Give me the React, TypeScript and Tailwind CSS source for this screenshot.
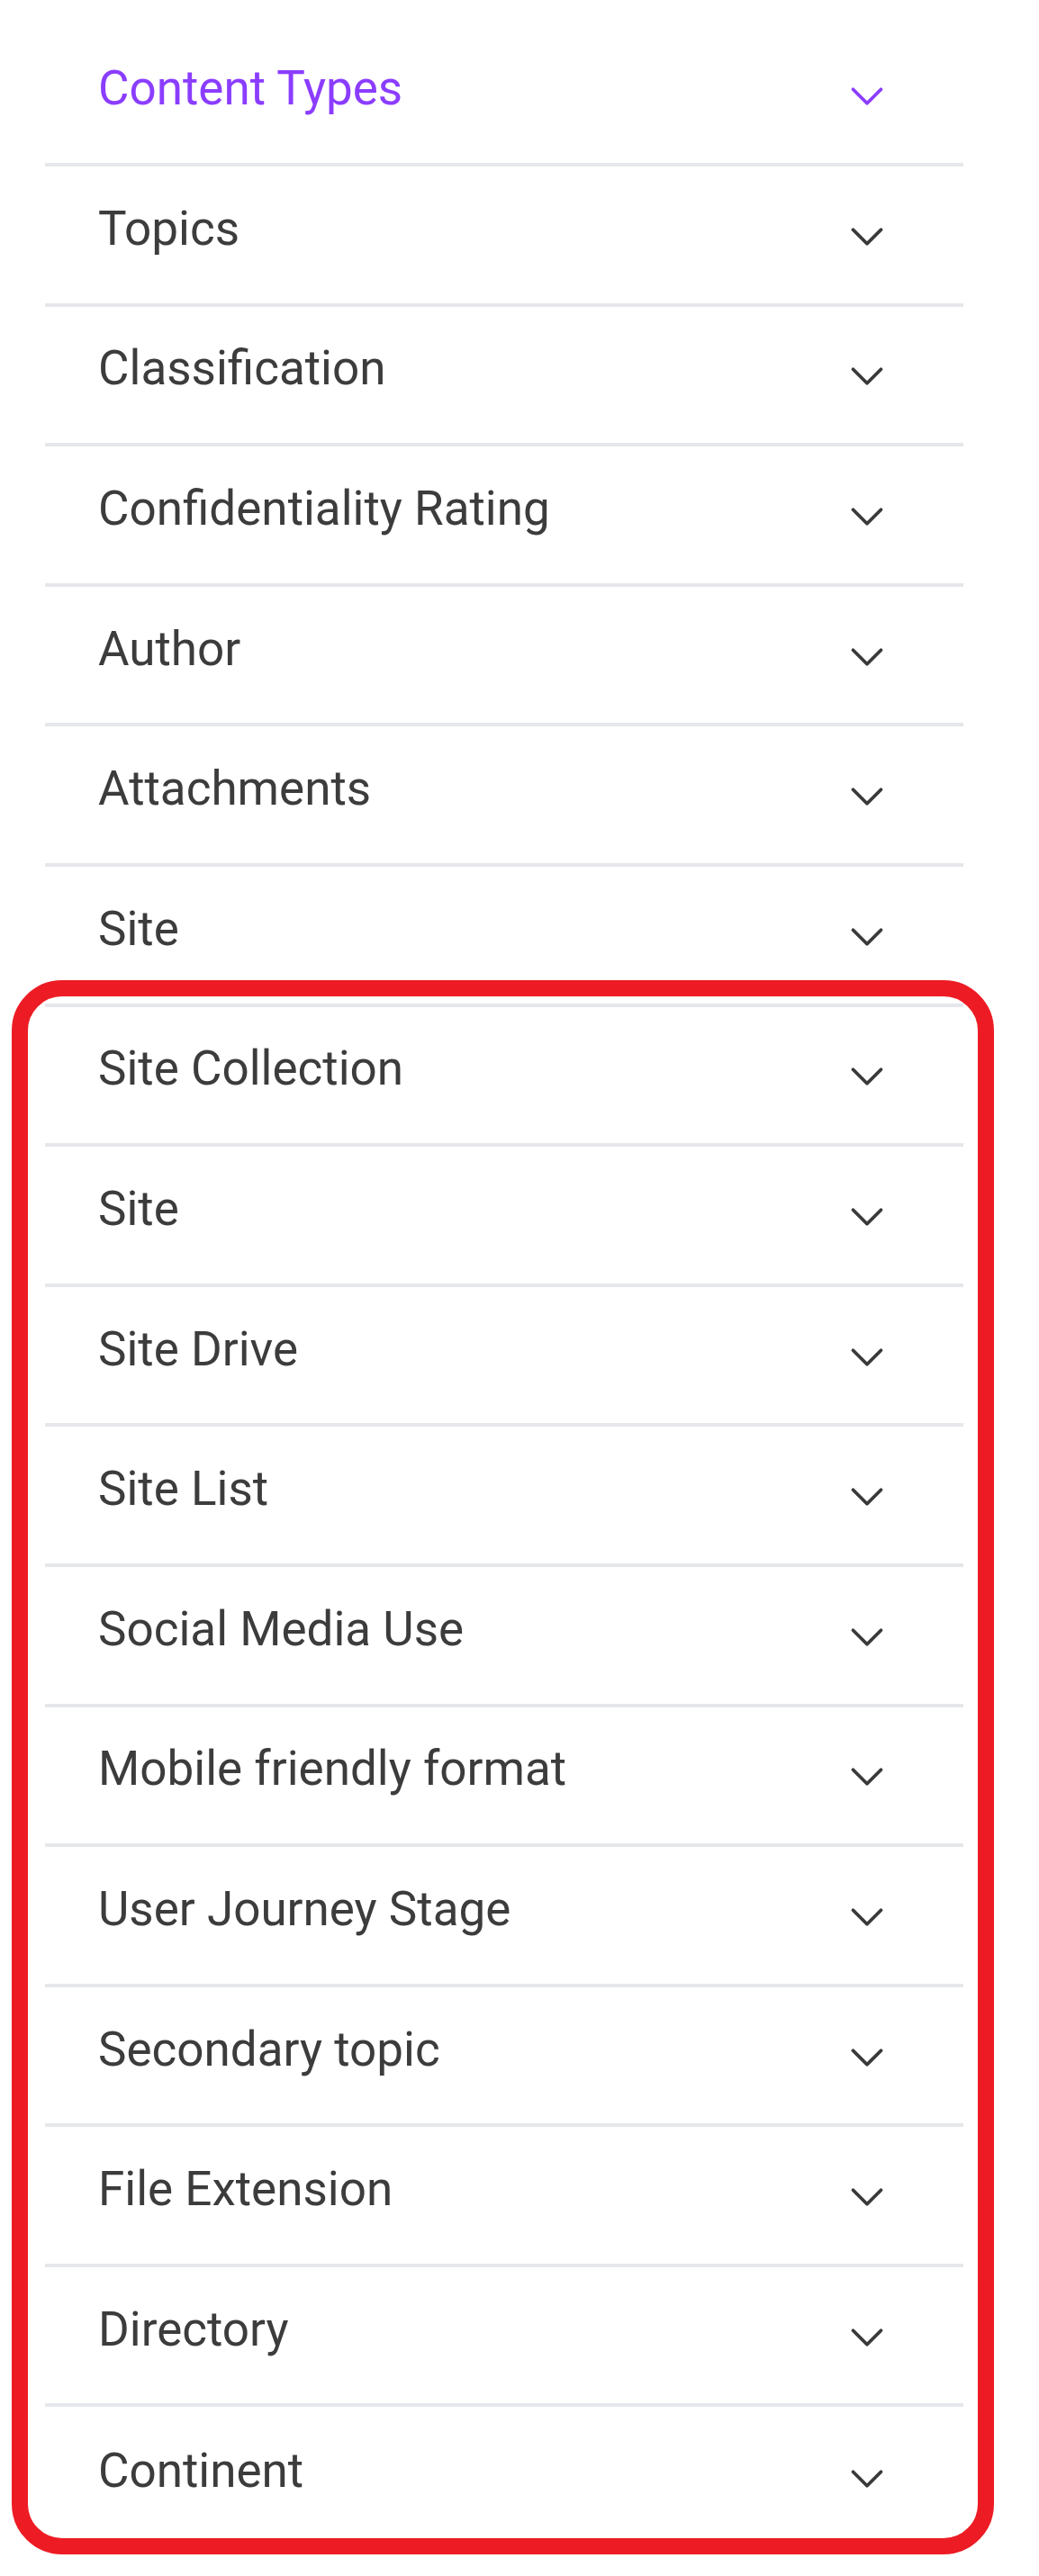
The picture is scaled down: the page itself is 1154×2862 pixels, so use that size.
import { ChevronDown } from "lucide-react";

const filters = [
  "Content Types",
  "Topics",
  "Classification",
  "Confidentiality Rating",
  "Author",
  "Attachments",
  "Site",
  "Site Collection",
  "Site",
  "Site Drive",
  "Site List",
  "Social Media Use",
  "Mobile friendly format",
  "User Journey Stage",
  "Secondary topic",
  "File Extension",
  "Directory",
  "Continent",
];

function FilterRow({ label, active, last }: { label: string; active: boolean; last: boolean }) {
  return (
    <div
      className={
        "flex h-[155.6px] items-center justify-between pl-[59px] pr-[76px] " +
        (last ? "" : "border-b-4 border-[#e5e7eb]")
      }
    >
      <span
        className={
          "mb-[13px] text-[53px] leading-none " + (active ? "text-[#8b3dff]" : "text-[#3c3c3c]")
        }
      >
        {label}
      </span>
      <ChevronDown
        size={62}
        strokeWidth={1.5}
        className={"mt-[4px] " + (active ? "text-[#8b3dff]" : "text-[#3a3a3a]")}
      />
    </div>
  );
}

export default function App() {
  return (
    <div className="relative h-[2862px] w-[1154px] bg-white font-['Roboto',sans-serif]">
      <div className="ml-[50px] w-[1020px] pt-[29.4px]">
        {filters.map((label, i) => (
          <FilterRow key={i} label={label} active={i === 0} last={i === filters.length - 1} />
        ))}
      </div>
      {/* highlight annotation */}
      <div className="pointer-events-none absolute left-[12.7px] top-[1089px] h-[1749px] w-[1091px] rounded-[56px] border-[18px] border-[#ed1c24]" />
    </div>
  );
}
